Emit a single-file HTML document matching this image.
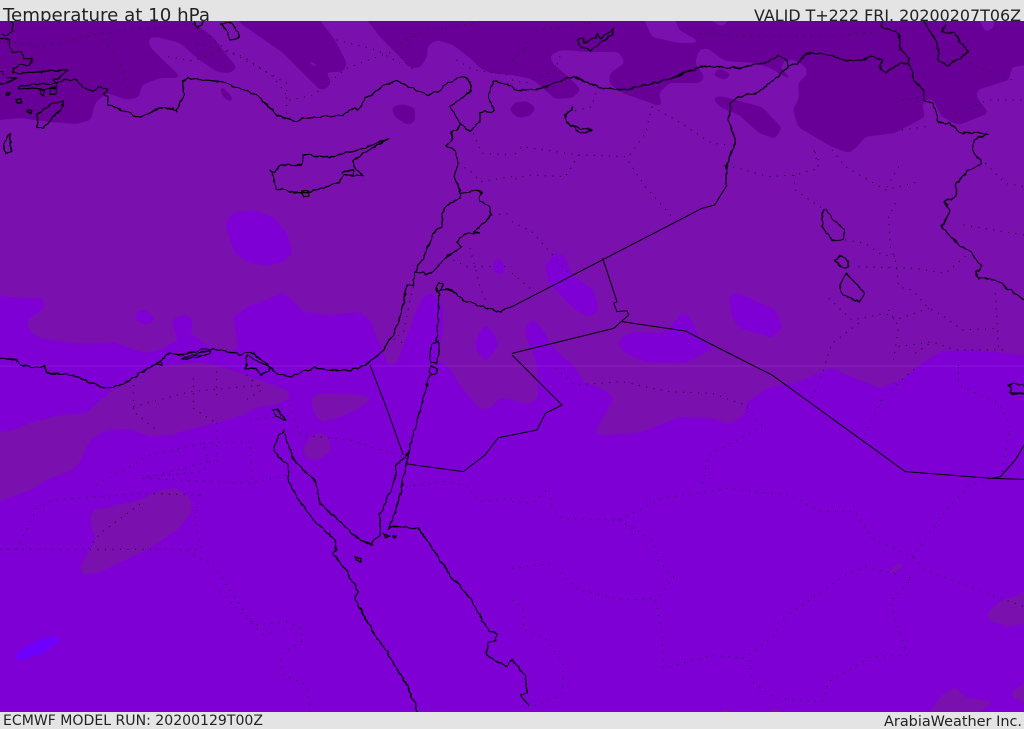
<!DOCTYPE html>
<html><head><meta charset="utf-8"><title>Temperature at 10 hPa</title>
<style>
html,body{margin:0;padding:0;background:#e4e4e4}
body{position:relative;width:1024px;height:729px;overflow:hidden}
svg{position:absolute;left:0;top:0;display:block}
text{font-family:"DejaVu Sans","Liberation Sans",sans-serif;fill:#222}
.c path{fill:none;stroke:#000;stroke-width:1;stroke-linejoin:round;vector-effect:non-scaling-stroke}
.k path{fill:none;stroke:#000;stroke-width:1.25;stroke-linejoin:round;vector-effect:non-scaling-stroke}
.d path{fill:none;stroke:#000;stroke-width:1;stroke-dasharray:1 6.5;opacity:.85;vector-effect:non-scaling-stroke}
</style></head><body>
<svg width="1024" height="729" viewBox="0 0 1024 729" xmlns="http://www.w3.org/2000/svg">
<defs>
<filter id="s" x="-60" y="-60" width="1150" height="850" filterUnits="userSpaceOnUse" color-interpolation-filters="sRGB">
<feGaussianBlur stdDeviation="2.4"/>
<feComponentTransfer><feFuncA type="linear" slope="10" intercept="-4.5"/></feComponentTransfer>
</filter>
<filter id="w" x="-20" y="0" width="1070" height="740" filterUnits="userSpaceOnUse" color-interpolation-filters="sRGB">
<feTurbulence type="fractalNoise" baseFrequency=".16" numOctaves="2" seed="4" result="n"/>
<feDisplacementMap in="SourceGraphic" in2="n" scale="4" xChannelSelector="R" yChannelSelector="G"/>
</filter>
<clipPath id="m"><rect x="0" y="21" width="1024" height="691"/></clipPath>
</defs>
<rect width="1024" height="729" fill="#e4e4e4"/>
<text x="3" y="21" font-size="17.5" textLength="207" lengthAdjust="spacingAndGlyphs">Temperature at 10 hPa</text>
<text x="1021" y="21" font-size="15.8" text-anchor="end" textLength="267" lengthAdjust="spacingAndGlyphs">VALID T+222 FRI. 20200207T06Z</text>
<text x="3" y="725" font-size="14" textLength="260" lengthAdjust="spacingAndGlyphs">ECMWF MODEL RUN: 20200129T00Z</text>
<text x="1022" y="726" font-size="14.4" text-anchor="end" textLength="138" lengthAdjust="spacingAndGlyphs">ArabiaWeather Inc.</text>
<g clip-path="url(#m)">
<rect x="0" y="21" width="1024" height="691" fill="#7f00d5"/>
<g fill="#7a10ae" filter="url(#s)">
<polygon points="-30,-20 1060,-20 1060,355 1024,355 972,350 942,351 919,365 902,380 879,388 852,377 832,368 795,383 769,387 747,402 744,415 730,424 712,418 679,417 639,433 600,435 595,432 614,398 602,388 584,383 574,365 570,363 552,347 542,328 532,319 524,330 537,365 538,398 529,404 512,400 500,398 490,408 480,410 460,385 447,365 437,363 443,330 443,307 433,293 422,297 408,333 397,363 388,365 383,353 370,320 360,312 330,315 303,312 290,297 280,292 267,300 250,305 233,317 238,347 230,352 210,347 190,333 193,322 187,315 175,317 172,323 178,340 160,350 143,353 113,342 90,344 67,342 40,338 28,330 28,320 45,307 43,298 20,298 0,296 -30,296"/>
<polygon points="-30,432 0,432 13,430 33,422 60,415 87,413 97,403 113,390 133,378 153,367 200,362 227,368 260,380 287,390 290,398 277,405 257,407 243,415 217,423 187,430 170,435 150,436 130,429 107,430 90,440 80,462 73,470 50,478 30,490 0,501 -30,508"/>
<polygon points="310,397 323,393 353,394 373,398 360,408 337,418 323,422 315,415"/>
<polygon points="303,448 310,437 322,432 330,440 330,452 317,461 305,457"/>
<polygon points="90,522 93,510 110,507 140,500 160,490 177,488 190,498 192,512 177,530 147,550 100,572 82,575 80,567 93,545 95,537"/>
<polygon points="884,575 895,565 905,562 902,568 889,574"/>
<polygon points="987,613 999,602 1040,586 1040,623 1005,626 989,620"/>
<polygon points="924,720 942,695 955,687 965,697 995,702 985,708 965,720"/>
<polygon points="1010,693 1040,672 1040,705 1015,700"/>
<polygon points="762,720 775,706 787,720"/>
<polygon points="712,720 725,708 742,720"/>
</g>
<g fill="#7f00d5" filter="url(#s)">
<polygon points="225,223 233,213 253,210 273,217 287,233 293,253 283,262 267,266 247,262 235,253 230,240"/>
<polygon points="134,315 142,309 150,313 155,319 148,325 138,323"/>
<polygon points="475,345 480,330 487,325 495,335 498,345 492,355 486,361 477,352"/>
<polygon points="492,266 498,257 505,265 504,273 497,275"/>
<polygon points="545,267 554,253 564,255 572,275 594,290 599,310 590,317 575,310 549,283"/>
<polygon points="729,295 739,293 775,310 783,327 772,338 739,328 732,317"/>
<polygon points="617,343 629,332 662,333 674,323 682,312 690,317 699,337 714,348 685,363 645,362 625,353"/>
</g>
<g fill="#6e00ff" filter="url(#s)"><polygon points="14,658 20,650 43,638 60,636 59,642 43,653 18,661"/></g>
<g fill="#680098" filter="url(#s)">
<polygon points="190,-20 190,20 213,37 237,68 230,73 217,72 197,58 180,43 157,37 148,38 150,47 163,60 182,78 160,78 142,85 139,97 127,100 107,93 95,103 91,120 77,124 50,122 20,118 0,120 -30,120 -30,-20"/>
<polygon points="215,-20 240,23 260,37 283,53 307,77 320,90 328,88 331,80 325,72 307,63 305,61 312,61 327,72 343,72 347,63 335,40 320,20 310,-20"/>
<polygon points="360,-20 367,20 380,37 400,57 410,68 420,68 427,57 428,45 437,40 453,45 470,58 480,68 490,73 512,75 532,79 545,90 555,99 572,98 581,90 572,80 552,63 550,55 562,50 589,52 619,52 625,63 610,73 609,83 622,93 662,107 659,93 669,83 699,83 705,78 695,63 699,50 707,48 725,61 755,63 770,68 790,80 792,78 780,68 785,60 795,60 806,67 807,75 798,83 799,97 793,110 798,127 832,147 849,153 857,147 865,137 895,133 925,117 922,103 932,98 942,117 959,125 989,113 977,98 977,90 1009,80 1012,67 1045,63 1045,-20"/>
<polygon points="712,75 720,68 732,75 725,80"/>
<polygon points="509,110 515,102 527,101 536,108 530,116 518,118"/>
<polygon points="391,107 403,104 415,108 415,122 407,125 395,117"/>
<polygon points="219,87 223,87 233,98 232,103 223,97"/>
<polygon points="712,98 720,96 762,107 782,128 775,139 759,133 739,115 720,107"/>
</g>
<g fill="#7a10ae" filter="url(#s)">
<polygon points="642,-20 642,15 652,37 679,43 702,43 679,30 662,-20"/>
<polygon points="702,-20 702,15 722,27 734,15 734,-20"/>
<polygon points="977,-20 977,15 985,32 994,28 994,-20"/>
</g>
<rect x="0" y="365.5" width="1024" height="1" fill="#fff" opacity=".09"/>

<!-- dotted internal borders -->
<g class="d" transform="scale(.33333)">
<path d="M400 90L300 100 130 140 20 125M420 85L600 70M300 100L370 210 390 285M590 130L680 155 730 170 820 230 870 300 940 285 1040 205 1160 160 1190 155 1240 210M1010 120L1130 150 1200 190M505 170L580 183 665 150M610 95L680 150 860 250 860 340M1200 130L1280 90 1430 70M1370 180L1420 210 1536 225M1420 400L1445 460 1536 465M1375 490L1420 520 1440 545 1536 530M1475 645L1536 640M1240 860L1230 900 1210 1000 1180 1015 1220 1035M1360 780L1400 800 1536 800M1410 745L1440 860 1460 910"/>
</g>
<g class="d" transform="translate(512,0) scale(.33333)">
<path d="M0 180L80 90 230 70M0 240L40 250 130 210 145 165M250 280L240 320 160 340M420 320L500 365 600 430 660 435M420 320L400 400 350 470 200 465 30 440 0 470M350 485L400 560 480 650M200 465L160 530 50 525 0 540M0 665L60 695 170 820M0 820L60 870M642 495L770 530 850 525 920 505 905 445 925 495M845 525L850 570 930 625M960 450L1000 500 1120 570 1220 545M1160 500L1120 570M1150 610L1130 650 1135 740 1150 780 1160 860 1200 870 1250 925 1290 945 1350 990 1450 985M1000 720L1060 730 1110 765 1160 770M1040 800L1210 805 1300 820 1370 760M1355 675L1536 705M1420 490L1480 550 1536 560M1450 880L1455 960 1460 1050M950 895L1020 960 1120 940 1150 960 1250 925M1130 930L1160 980 1145 1080M1040 970L960 1030 940 1090M1160 1040L1260 1025 1330 1050 1480 1050M1210 1060L1260 1025M560 100L740 110 930 110 1100 95M1170 300L1230 290M1170 390L1240 380M1330 340L1430 300 1536 300M1370 190L1500 240"/>
</g>
<g class="d" transform="translate(0,365) scale(.33333)">
<path d="M0 553L600 553M50 553L110 430 160 405 430 385 600 390M265 550L300 505 430 410M600 390L585 470 605 560M290 360L450 270 610 235 625 290 430 340M430 340L745 355 860 330M610 235L750 230 755 355M650 290L650 175M400 60L400 140 470 195M400 125L570 80 790 60M580 40L580 130 650 175M650 20L650 110M740 30L785 75 730 110M750 165L880 150M870 120L900 210 1050 225 1210 275M440 335L610 320 630 290M560 560L640 600 760 780 860 770 905 790 905 830 840 870 850 930 920 960 930 1040M660 680L760 780 790 810 880 790M1220 365L1340 350 1400 365 1440 410 1536 400"/>
</g>
<g class="d" transform="translate(512,365) scale(.33333)">
<path d="M130 10L190 60 330 50 470 80 600 85 700 120 750 185 590 270 570 360M0 410L60 415 110 370 120 430 150 460 320 465 450 400 650 370 830 390 930 440 1030 440 1080 520 1200 575 1250 620 1536 725M320 465L420 525 440 590 485 635 430 710 450 800 455 910 600 870 700 880 790 810 800 770 1000 630 1060 605 1200 640 1135 710 1185 870 1080 875 950 950 930 1010 790 1000 720 950 715 880M0 610L115 595 200 675 340 705 430 700M0 705L35 730 35 795 100 820 155 900 150 990 60 1025M1200 575L1300 440 1370 360 1440 340M1060 210L1110 100 1220 0M900 100L935 15M1340 0L1340 60 1460 115 1495 180 1470 320"/>
</g>

<!-- straight political borders -->
<g class="c" transform="translate(512,0) scale(.33333)">
<path d="M0 920L570 625 608 615 645 555"/>
<path d="M0 1060L305 985 350 945 345 932 315 935 305 910 315 905 272 775M330 965L520 993 720 1095M0 1065L30 1095"/>
</g>
<g class="c" transform="translate(0,365) scale(.33333)">
<path d="M1110 0L1160 130 1210 270M1222 297L1390 320 1455 270 1495 218 1536 210"/>
</g>
<g class="c" transform="translate(512,365) scale(.33333)">
<path d="M720 0L780 30 1180 320 1440 340 1536 343M1440 340L1465 335 1510 285 1536 240M30 0L150 120 100 145 75 195 0 210"/>
</g>

<!-- wiggly coasts and river borders -->
<g filter="url(#w)">
<g class="k" transform="scale(.33333)">
<path d="M30 63L40 75 38 95 20 107 5 100M0 115L25 120 35 160 60 155 75 175 95 178 90 195 60 195 40 205 40 220 70 220 140 213 205 210 175 235 160 240 165 250 90 253 60 258 55 268 90 265 125 268 165 265 170 250 195 240 225 238 250 262 280 275 300 258 322 270 310 285 325 290 325 312 365 330 395 340 400 350 425 350 480 325 520 325 530 335 540 310 550 285 548 245 565 235 665 245 770 285 800 315 830 345 890 365 910 355 1000 348 1030 345 1060 325 1075 330 1100 295 1160 250 1190 243 1215 255 1285 285 1320 272 1330 258 1385 228 1410 245 1415 272 1350 320 1380 370 1370 390 1355 395 1355 420 1340 435 1365 450 1375 490 1362 530 1383 580 1380 595 1350 610 1330 630 1325 680 1305 692 1280 755 1245 815 1240 855 1220 860 1205 935 1180 1005 1140 1060 1095 1095"/>
<path d="M1245 815L1280 822 1305 815 1315 790 1385 740 1370 725 1395 700 1440 700 1422 695 1475 645 1465 615 1435 600 1445 580 1430 572 1383 580"/>
<path d="M1380 370L1410 395 1440 365 1440 338 1485 333 1465 295 1480 243 1536 255"/>
<path d="M1318 848L1328 855 1325 872 1312 875 1308 860ZM1316 876L1315 950 1310 1020M1295 1035L1315 1022 1318 1060 1310 1090 1292 1088 1290 1055ZM1320 870L1345 868 1370 880 1395 905 1500 935 1536 920"/>
<path d="M810 510L822 518 845 495 905 495 912 463 985 472 1075 450 1165 418 1095 458 1060 480 1060 500 1090 528 1030 525 1020 545 960 568 920 578 880 578 830 565 818 530ZM1025 518L1060 510 1060 528 1030 525M905 575L920 572 925 590 912 590Z"/>
<path d="M110 345L150 315 190 303 185 325 130 385 110 380 115 365ZM10 430L30 400 35 455 15 460ZM665 70L695 68 720 110 690 122 680 95ZM580 63L595 85 610 63M20 235L50 235 20 250 0 252M0 215L10 215 10 225M20 278L32 278 30 285 20 284ZM48 298L60 298 66 310 50 308ZM80 332L95 332 95 338 80 338ZM120 272L132 272 132 288 120 282ZM150 262L170 262 168 282 150 280Z"/>
<path d="M0 1075L50 1080 60 1095 90 1102 130 1098 140 1120 220 1125 310 1165 340 1163 390 1140 420 1120 445 1105 472 1090 500 1063 515 1062 550 1065 620 1045 680 1055 720 1063 750 1055 800 1090 830 1120 870 1131 940 1104 990 1110 1050 1110 1100 1095"/>
<path d="M465 1095L480 1085 490 1095ZM545 1075L630 1050 630 1062 590 1070 550 1078Z"/>
<path d="M735 1105L742 1065 775 1085 810 1100 805 1115 780 1125 770 1105Z"/>
</g>
<g class="k" transform="translate(512,0) scale(.33333)">
<path d="M0 258L5 270 70 270 185 230 260 263 345 268 480 235 570 198 680 205 770 185 800 168 825 180 830 200"/>
<path d="M645 555L642 500 670 425 650 360 655 315 675 290 740 278 830 200 855 192 885 160 935 160 1000 180 1050 182 1075 168 1110 180 1105 205 1120 218 1165 190 1195 190"/>
<path d="M1108 63L1110 80 1160 100 1165 150 1195 175 1190 190 1210 245 1235 270 1235 300 1265 310 1280 370 1310 368 1345 398 1430 400 1385 420 1380 450 1410 490 1365 515 1330 555 1335 590 1295 605 1315 630 1290 680 1340 735 1375 755 1410 800 1390 820 1400 835 1450 840 1536 900"/>
<path d="M1235 63L1275 130 1280 180 1305 197 1370 157 1340 120 1330 100 1290 95 1300 70"/>
<path d="M195 120L210 115 220 130 250 115 255 100 265 118 305 85 300 105 270 125 235 150 200 135ZM185 320L160 345 165 370 205 385 240 390 205 402M165 365L205 400"/>
<path d="M935 625L930 680 960 720 995 720 1000 690 965 660 940 625M968 780L985 765 1010 785 1010 800 990 802ZM1003 820L985 850 990 885 1040 905 1060 880 1020 840Z"/>
</g>
<g class="k" transform="translate(0,365) scale(.33333)">
<path d="M855 195L835 210 820 260 865 300 865 350 900 410 945 470 1005 525 1010 555 1000 565 1040 620 1075 680 1065 705 1120 800 1160 860 1220 960 1253 1040"/>
<path d="M850 200L880 280 945 350 960 415 1020 470 1085 530 1115 538 1140 510 1140 450 1185 340 1190 300 1225 265 1200 390 1180 455 1165 495 1175 485 1255 490 1305 560 1350 630 1410 700 1465 795 1490 805 1485 825 1465 835 1460 870 1520 905 1536 880"/>
<path d="M1225 265L1250 170 1290 30M1285 20L1292 3 1310 10 1308 25 1295 28Z"/>
<path d="M815 135L830 130 850 155 855 165 830 155ZM1150 505L1170 515 1155 517ZM1178 512L1188 512 1185 517 1178 517ZM1065 575L1080 580 1082 590 1065 580Z"/>
</g>
<g class="k" transform="translate(512,365) scale(.33333)">
<path d="M0 885L40 930 45 985 25 990 50 1022"/>
<path d="M1490 60L1510 55 1536 62 1536 85 1492 85 1500 72Z"/>
</g>
</g>
</g>
</svg>
</body></html>
